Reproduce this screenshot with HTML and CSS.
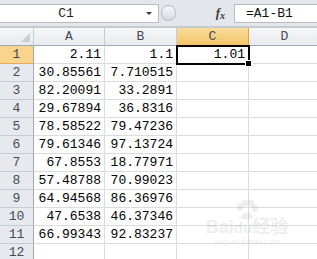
FILE: index.html
```html
<!DOCTYPE html>
<html lang="en">
<head>
    <meta charset="UTF-8">
    <title>Sheet1</title>
    <link rel="stylesheet" href="styles.css">
</head>
<body>
    <!-- formula bar -->
    <div class="formula-bar">
        <div class="name-box">
            <span class="name-text">C1</span>
            <span class="drop-arrow"></span>
        </div>
        <div class="grip"></div>
        <div class="fx"><i>f</i><i class="x">x</i></div>
        <div class="formula-box">=A1-B1</div>
    </div>

    <!-- sheet -->
    <div class="sheet">
        <div class="row head-row">
            <div class="cell corner"><span class="tri"></span></div>
            <div class="cell col-head">A</div>
            <div class="cell col-head">B</div>
            <div class="cell col-head active">C</div>
            <div class="cell col-head last">D</div>
        </div>
        <div class="row">
            <div class="cell row-head active">1</div>
            <div class="cell num">2.11</div>
            <div class="cell num">1.1</div>
            <div class="cell num selected">1.01<span class="handle"></span></div>
            <div class="cell last"></div>
        </div>
        <div class="row"><div class="cell row-head">2</div><div class="cell num">30.85561</div><div class="cell num">7.710515</div><div class="cell"></div><div class="cell last"></div></div>
        <div class="row"><div class="cell row-head">3</div><div class="cell num">82.20091</div><div class="cell num">33.2891</div><div class="cell"></div><div class="cell last"></div></div>
        <div class="row"><div class="cell row-head">4</div><div class="cell num">29.67894</div><div class="cell num">36.8316</div><div class="cell"></div><div class="cell last"></div></div>
        <div class="row"><div class="cell row-head">5</div><div class="cell num">78.58522</div><div class="cell num">79.47236</div><div class="cell"></div><div class="cell last"></div></div>
        <div class="row"><div class="cell row-head">6</div><div class="cell num">79.61346</div><div class="cell num">97.13724</div><div class="cell"></div><div class="cell last"></div></div>
        <div class="row"><div class="cell row-head">7</div><div class="cell num">67.8553</div><div class="cell num">18.77971</div><div class="cell"></div><div class="cell last"></div></div>
        <div class="row"><div class="cell row-head">8</div><div class="cell num">57.48788</div><div class="cell num">70.99023</div><div class="cell"></div><div class="cell last"></div></div>
        <div class="row"><div class="cell row-head">9</div><div class="cell num">64.94568</div><div class="cell num">86.36976</div><div class="cell"></div><div class="cell last"></div></div>
        <div class="row"><div class="cell row-head">10</div><div class="cell num">47.6538</div><div class="cell num">46.37346</div><div class="cell"></div><div class="cell last"></div></div>
        <div class="row"><div class="cell row-head">11</div><div class="cell num">66.99343</div><div class="cell num">92.83237</div><div class="cell"></div><div class="cell last"></div></div>
        <div class="row"><div class="cell row-head">12</div><div class="cell"></div><div class="cell"></div><div class="cell"></div><div class="cell last"></div></div>
    </div>

    <!-- faint watermark over the grid -->
    <div class="watermark">
        <svg class="paw" width="26" height="20" viewBox="0 0 26 20">
            <ellipse cx="6" cy="7" rx="3" ry="4" />
            <ellipse cx="11" cy="3" rx="3" ry="3.5" />
            <ellipse cx="17" cy="3" rx="3" ry="3.5" />
            <ellipse cx="21" cy="8" rx="3" ry="4" />
            <path d="M7 17 C8 11 18 11 19 17 C19 20 7 20 7 17 Z" />
        </svg>
        <div class="wm-brand">Bai<span class="du">du</span>经验</div>
        <div class="wm-url">jingyan.baidu.com</div>
    </div>
</body>
</html>
```

FILE: styles.css
```css
body {
    margin: 0;
    width: 317px;
    height: 259px;
    overflow: hidden;
    background: #ffffff;
    font-family: "Liberation Mono", "DejaVu Sans Mono", monospace;
    position: relative;
}

/* formula bar */
.formula-bar {
    height: 27px;
    box-sizing: border-box;
    display: flex;
    align-items: flex-start;
    padding-top: 4px;
    background: #e3e6ea;
    border-bottom: 1px solid #c4c9d0;
}

.name-box {
    width: 159px;
    height: 19px;
    box-sizing: border-box;
    background: #ffffff;
    border: 1px solid #b6bcc6;
    border-left: none;
    display: flex;
    align-items: center;
    position: relative;
}

.name-text {
    flex: 1;
    text-align: center;
    font-size: 13px;
    color: #1e1e1e;
    padding-right: 14px;
}

.drop-arrow {
    width: 0;
    height: 0;
    border-left: 3px solid transparent;
    border-right: 3px solid transparent;
    border-top: 3px solid #3b3b3b;
    margin-right: 6px;
}

.grip {
    width: 15px;
    height: 16px;
    margin-top: 1px;
    margin-left: 2px;
    border: 1px solid #b3b9c2;
    border-radius: 8px;
    background: linear-gradient(#f7f8fa, #d7dbe1);
    box-sizing: border-box;
}

.fx {
    width: 58px;
    height: 18px;
    display: flex;
    justify-content: flex-end;
    align-items: center;
    padding-right: 9px;
    box-sizing: border-box;
    font-family: "Liberation Serif", serif;
    font-size: 13px;
    font-weight: bold;
    color: #3a3a3a;
}

.fx .x {
    font-size: 10px;
    margin-top: 4px;
}

.formula-box {
    flex: 1;
    height: 19px;
    box-sizing: border-box;
    background: #ffffff;
    border: 1px solid #b6bcc6;
    border-right: none;
    font-size: 13px;
    line-height: 17px;
    padding-left: 11px;
    color: #111111;
}

/* grid */
.sheet {
    border-top: 1px solid #c5cbd3;
}

.row {
    display: grid;
    grid-template-columns: 34px 71px 72px 72px 72px;
    height: 18px;
}

.cell {
    box-sizing: border-box;
    height: 18px;
    border-right: 1px solid #dadcdd;
    border-bottom: 1px solid #dadcdd;
    font-size: 13px;
    line-height: 17px;
    color: #000000;
    white-space: nowrap;
    position: relative;
}

.num {
    text-align: right;
    padding-right: 3px;
}

.head-row .cell {
    background: linear-gradient(#f6f7f9, #e7eaee);
    border-right: 1px solid #c5cbd3;
    border-bottom: 1px solid #9fa8b4;
    text-align: center;
    color: #444b55;
}

.head-row .cell.active {
    background: linear-gradient(#f9dc9c, #f2c466);
    border-bottom: 1px solid #e8a84a;
    border-right: 1px solid #dba34d;
}

.corner .tri {
    position: absolute;
    right: 3px;
    bottom: 3px;
    width: 0;
    height: 0;
    border-left: 9px solid transparent;
    border-bottom: 9px solid #c9ced6;
}

.row-head {
    background: #e6e9ee;
    border-right: 1px solid #9fa8b4;
    border-bottom: 1px solid #c5cbd3;
    text-align: center;
    color: #444b55;
}

.row-head.active {
    background: #f8d48c;
    border-bottom: 1px solid #e3ad5a;
}

.selected {
    outline: 2px solid #000000;
    outline-offset: -1px;
    z-index: 1;
    border-bottom-color: transparent;
}

.handle {
    position: absolute;
    right: -4px;
    bottom: -4px;
    width: 5px;
    height: 5px;
    background: #000000;
    border: 1px solid #ffffff;
}

/* watermark */
.watermark {
    position: absolute;
    left: 197px;
    top: 200px;
    width: 100px;
    text-align: center;
    color: rgba(150, 150, 150, 0.18);
    font-family: "Liberation Sans", "Noto Sans CJK SC", sans-serif;
    pointer-events: none;
}

.paw {
    display: block;
    margin: 0 auto -2px auto;
    fill: rgba(150, 150, 150, 0.16);
}

.wm-brand {
    font-size: 18px;
    font-weight: bold;
    line-height: 19px;
}

.wm-brand .du {
    font-size: 15px;
}

.wm-url {
    font-size: 8px;
    line-height: 10px;
}
```
